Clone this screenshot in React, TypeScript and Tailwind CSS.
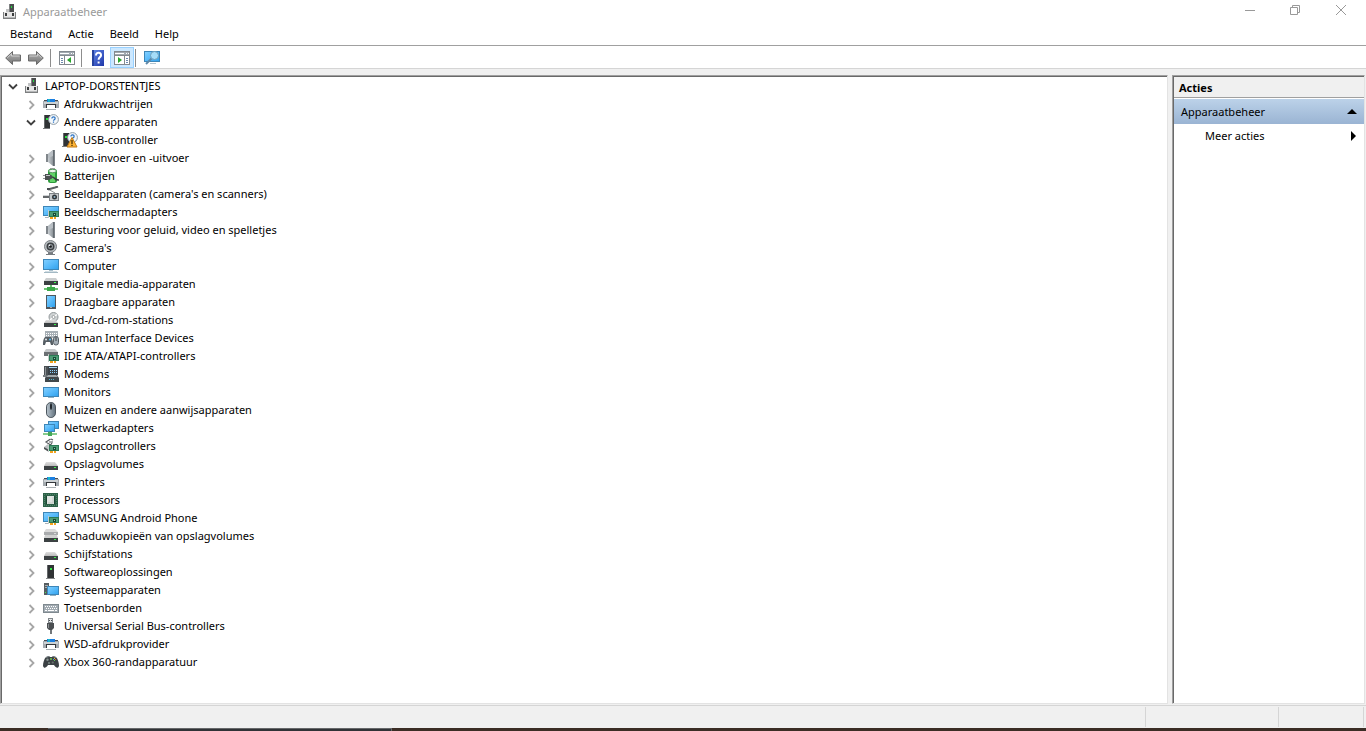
import { useState, type ReactNode } from "react";

const EDGE = "#3d86b8";

function Defs() {
  return (
    <svg className="absolute h-0 w-0" aria-hidden="true">
      <defs>
        <linearGradient id="screen" x1="0" y1="0" x2="1" y2="1">
          <stop offset="0" stopColor="#84d0ff" />
          <stop offset=".5" stopColor="#58bafa" />
          <stop offset="1" stopColor="#2fa0ec" />
        </linearGradient>
        <linearGradient id="metal" x1="0" y1="0" x2="0" y2="1">
          <stop offset="0" stopColor="#dedede" />
          <stop offset="1" stopColor="#bcbcbc" />
        </linearGradient>
        <linearGradient id="cone" x1="0" y1="0" x2="1" y2="0">
          <stop offset="0" stopColor="#c9ced2" />
          <stop offset=".5" stopColor="#a0a7ac" />
          <stop offset="1" stopColor="#737a80" />
        </linearGradient>
        <linearGradient id="arrow" x1="0" y1="0" x2="0" y2="1">
          <stop offset="0" stopColor="#b4b4b4" />
          <stop offset="1" stopColor="#747474" />
        </linearGradient>
        <linearGradient id="help" x1="0" y1="0" x2="1" y2="1">
          <stop offset="0" stopColor="#6288e8" />
          <stop offset="1" stopColor="#1e36a8" />
        </linearGradient>
        <linearGradient id="mouse" x1="0" y1="0" x2="1" y2="0">
          <stop offset="0" stopColor="#b9c5ce" />
          <stop offset="1" stopColor="#61707c" />
        </linearGradient>
      </defs>
    </svg>
  );
}

function Screen({ x, y, w, h }: { x: number; y: number; w: number; h: number }) {
  return <rect x={x + 0.5} y={y + 0.5} width={w - 1} height={h - 1} fill="url(#screen)" stroke={EDGE} />;
}

function Card({ x = 5, y = 6 }: { x?: number; y?: number }) {
  return (
    <g>
      <path d={`M${x} ${y}h1v8h-1z`} fill="#c3ccc7" />
      <rect x={x + 1} y={y + 1} width="10" height="6" fill="#2c7a55" />
      <rect x={x + 2} y={y + 2} width="8" height="4" fill="#4c9c74" />
      <rect x={x + 5} y={y + 3} width="3" height="3" fill="#174a35" />
      <rect x={x + 6} y={y + 4} width="1" height="1" fill="#8fd0ae" />
      <path d={`M${x + 2} ${y + 7}h3v2h-3zM${x + 6} ${y + 7}h2v2h-2z`} fill="#f3a31c" />
    </g>
  );
}

function Drive({ y = 6 }: { y?: number }) {
  return (
    <g>
      <path d={`M3 ${y}h9l3 4H1z`} fill="url(#metal)" />
      <rect x="1" y={y + 4} width="14" height="4" fill="#3c4143" />
      <rect x="11" y={y + 5} width="2" height="1" fill="#39f04a" />
    </g>
  );
}

function Tower({ x = 1 }: { x?: number }) {
  return (
    <g>
      <rect x={x} y="1" width="6" height="14" fill="#303335" />
      <rect x={x} y="1" width="1" height="14" fill="#66696b" />
      <rect x={x + 2} y="4" width="2" height="2" fill="#2be33f" />
      <path d={`M${x - 1} 14h7v1h-7z`} fill="#77797b" />
    </g>
  );
}

function Bubble() {
  return (
    <g>
      <circle cx="10.500" cy="5.500" r="4.900" fill="#f4f8fb" stroke="#8f9ca6" />
      <path d="M8.900 4.400c0-2.200 3.400-2 3.200 0 0 1.200-1.600 1.300-1.600 2.300M10.500 7.600v1.200" fill="none" stroke="#2c73c4" strokeWidth="1.200" />
    </g>
  );
}

const printer = (
  <g>
    <rect x="0" y="5" width="16" height="7" fill="#a4aaaf" />
    <rect x="1" y="6" width="14" height="2" fill="#cdd2d5" />
    <rect x="1" y="4" width="3" height="1" fill="#474c50" />
    <rect x="12" y="4" width="3" height="1" fill="#474c50" />
    <rect x="4" y="3" width="8" height="3" fill="#1b7fe0" />
    <rect x="5" y="3" width="2" height="3" fill="#1fb7c9" />
    <rect x="3" y="8" width="10" height="4" fill="#34383b" />
    <rect x="4" y="9" width="8" height="4" fill="#ffffff" />
    <rect x="3" y="13" width="10" height="1" fill="#a9afb3" />
  </g>
);

const speaker = (
  <g>
    <rect x="3" y="4" width="3" height="8" fill="#80868b" />
    <path d="M5 4l5-4h2v16h-2l-5-4z" fill="url(#cone)" />
    <path d="M5 4l5-4v6L5 8z" fill="#b9bfc4" />
    <path d="M10 0h1v16h-1z" fill="#656c72" />
  </g>
);

const adapter = (
  <g>
    <Screen x={0} y={2} w={16} h={10} />
    <rect x="2" y="13" width="4" height="1" fill="#aab3b8" />
    <Card />
  </g>
);

const pcUnit = (
  <g>
    <rect x="7" y="0" width="5" height="9" fill="#4a4c4d" />
    <rect x="7" y="0" width="1" height="9" fill="#808283" />
    <rect x="9" y="2" width="1" height="2" fill="#20df3c" />
    <path d="M4 5h3v3H4z" fill="#c2c3c4" />
    <path d="M1 8h13v7H1z" fill="#7d7f80" />
    <path d="M2 8h11v5H2z" fill="#e6e6e6" />
    <path d="M3 9h2v3H3zM10 9h2v3h-2z" fill="#3b3d3e" />
    <path d="M2 13h11v1H2z" fill="#b5b7b8" />
  </g>
);

const icons: Record<string, ReactNode> = {
  pcUnit,
  printer,
  speaker,
  adapter,
  unknown: (
    <g>
      <Tower />
      <Bubble />
    </g>
  ),
  warning: (
    <g>
      <Tower />
      <Bubble />
      <path d="M10 5.500l5 9.500H5z" fill="#ffb536" stroke="#c27a14" />
      <path d="M10 8v4M10 12.800v1.300" stroke="#3b2500" strokeWidth="1.200" />
    </g>
  ),
  battery: (
    <g>
      <path d="M7 0h5v2H7z" fill="#9aa39c" />
      <rect x="5" y="1" width="9" height="14" rx="2.500" fill="#2d9a3c" />
      <path d="M7 4h5v10H7z" fill="#62d468" />
      <ellipse cx="9.500" cy="3" rx="3.800" ry="1.700" fill="#f0f7f0" stroke="#4a8a56" strokeWidth=".8" />
      <path d="M0 7.500h3M0 10.500h3" stroke="#8d9193" />
      <path d="M2 6h4l3 1.500v3L6 12H2z" fill="#4b4f51" />
      <path d="M3 7h4v1H3z" fill="#c2c6c8" />
      <path d="M9 9c3 0 2.500 3.500 7 3" fill="none" stroke="#3a3e40" strokeWidth="1.500" />
    </g>
  ),
  imaging: (
    <g>
      <path d="M5 3.500l7-2 3-1" stroke="#5b6063" strokeWidth="2" />
      <path d="M5 3l7 4" stroke="#8b9093" />
      <path d="M4 2h3v2H4z" fill="#484c4f" />
      <path d="M0 10h8v2H0z" fill="#63676a" />
      <path d="M0 9h7v1H0z" fill="#cfd2d4" />
      <path d="M6 7h10v8H6z" fill="#7d8286" />
      <path d="M7 8h8v6H7z" fill="#c6cacd" />
      <circle cx="11.500" cy="11" r="2.500" fill="#30363a" />
      <circle cx="11.500" cy="11" r="1" fill="#8fb1c5" />
    </g>
  ),
  camera: (
    <g>
      <path d="M5 12h5v2H5zM3 14h9v1H3z" fill="#777c80" />
      <circle cx="7.500" cy="6.500" r="6" fill="#b8bdc1" stroke="#7b8084" />
      <circle cx="7.500" cy="6.500" r="4" fill="#3c4043" />
      <circle cx="7.500" cy="6.500" r="2.500" fill="#8d9499" />
      <circle cx="7.500" cy="6.500" r="1.300" fill="#16181a" />
      <circle cx="6.500" cy="5.300" r=".8" fill="#fff" />
    </g>
  ),
  computer: (
    <g>
      <Screen x={0} y={1} w={16} h={11} />
      <path d="M6 12h4v1H6z" fill="#a9c0cd" />
      <path d="M1 14h14v1H1z" fill="#a3b9c4" />
      <path d="M2 13h12v1H2z" fill="#d2dee4" />
    </g>
  ),
  media: (
    <g>
      <path d="M3 2h10l2 3H1z" fill="#cbcecf" />
      <rect x="1" y="5" width="14" height="4" fill="#3c4143" />
      <rect x="11" y="6" width="2" height="1" fill="#3eff50" />
      <path d="M7 9h2v3H7zM1 12h14v2H1z" fill="#6cc274" />
      <path d="M4 11h8v4H4z" fill="#3ca84a" />
    </g>
  ),
  portable: (
    <g>
      <rect x="3" y="1" width="10" height="14" fill="#4f565c" />
      <rect x="4" y="2" width="8" height="11" fill="url(#screen)" />
      <rect x="7" y="13" width="2" height="1" fill="#a7aaad" />
    </g>
  ),
  disc: (
    <g>
      <circle cx="10.500" cy="5" r="4.500" fill="#cfd3d4" stroke="#92989b" />
      <path d="M10.500 5L14 2.500M10.500 5L7 8" stroke="#fff" strokeWidth="1.200" />
      <circle cx="10.500" cy="5" r="1.500" fill="#fff" stroke="#8a8f92" strokeWidth=".8" />
      <path d="M3 8h9l3 3H1z" fill="url(#metal)" />
      <rect x="1" y="11" width="14" height="4" fill="#3c4143" />
      <rect x="11" y="12" width="2" height="1" fill="#39f04a" />
    </g>
  ),
  hid: (
    <g>
      <path d="M2 1h13v7H2z" fill="#a7afb5" />
      <path d="M3 3.500h11M3 5.500h11" stroke="#fff" strokeDasharray="1 1" />
      <path d="M2 7h6c2 2 2 5 2 8H8l-1-3H3l-1 3H0c0-3 0-6 2-8z" fill="#565e64" />
      <circle cx="3" cy="9.500" r="1" fill="#e5e8ea" />
      <circle cx="7" cy="9.500" r="1" fill="#5ec0f2" />
      <rect x="10.500" y="6.500" width="5" height="8.500" rx="2.400" fill="#a3adb5" stroke="#586066" />
      <path d="M13 7v4" stroke="#3d4246" />
    </g>
  ),
  ide: (
    <g>
      <path d="M3 1h9l3 3H1z" fill="#c4c7c9" />
      <path d="M1 4h14v4H1z" fill="#6b7073" />
      <Card />
    </g>
  ),
  modem: (
    <g>
      <path d="M1 0h4v10H1z" fill="#4b5155" />
      <path d="M2 1h1v8H2z" fill="#8b9195" />
      <path d="M5 0h10v9H5z" fill="#3a4248" />
      <path d="M6 1h8v1H6z" fill="#a9d7f2" />
      <path d="M7 4.500h7M7 6.500h7" stroke="#8fd0fa" strokeDasharray="1 1" />
      <path d="M0 9h4v2H0z" fill="#797f83" />
      <path d="M4 9h10l2 3v4H2v-4z" fill="#41484c" />
      <path d="M5 9h8l2 2H3z" fill="#a1a8ac" />
      <path d="M6 13.500h5" stroke="#54b6d1" strokeDasharray="1 1" />
    </g>
  ),
  monitor: (
    <g>
      <Screen x={0} y={3} w={16} h={10} />
      <path d="M5 13h6v1H5z" fill="#8fb2c5" />
    </g>
  ),
  mouse: (
    <g>
      <rect x="3.500" y=".5" width="9" height="15" rx="4.400" fill="url(#mouse)" stroke="#4c565e" />
      <path d="M8 1v7" stroke="#343a3f" />
      <rect x="7" y="2" width="2" height="5" rx="1" fill="#22292e" />
    </g>
  ),
  network: (
    <g>
      <Screen x={5} y={1} w={11} h={8} />
      <Screen x={1} y={4} w={11} h={8} />
      <path d="M6 12h2v1H6z" fill="#78bf7b" />
      <path d="M0 13h14v2H0z" fill="#86cb8c" />
      <path d="M5 12h4v4H5z" fill="#43a858" />
    </g>
  ),
  controller: (
    <g>
      <path d="M1 9l4-3 5 2v5H5z" fill="#bcc0c3" />
      <path d="M1 9l5 3v2l-5-3z" fill="#4c5052" />
      <path d="M7.500 1L3 4l4.500 3L9 5M6 4h4M8 1l2 1" fill="none" stroke="#54595c" strokeWidth="1.200" />
      <Card />
    </g>
  ),
  drive: <Drive />,
  processor: (
    <g>
      <rect x="0" y="1" width="15" height="14" fill="#2d6148" />
      <path d="M1 2.500h13M1 13.500h13M1.500 2v12M13.500 2v12" stroke="#4f8368" strokeDasharray="1 1" />
      <rect x="3" y="4" width="9" height="8" fill="#1c4733" />
      <rect x="4" y="4" width="7" height="8" fill="#dfe4e1" />
      <path d="M5 11h5V5" fill="none" stroke="#c2cac5" />
    </g>
  ),
  shadow: (
    <g>
      <path d="M3 1h9l3 3H1z" fill="#dadada" />
      <rect x="1" y="4" width="14" height="3" fill="#a9abad" />
      <rect x="11" y="5" width="2" height="1" fill="#d9dcdc" />
      <path d="M2 7h12l1 3H1z" fill="#cfd0d0" />
      <rect x="1" y="10" width="14" height="4" fill="#3c4143" />
      <rect x="11" y="11" width="2" height="1" fill="#39f04a" />
    </g>
  ),
  software: (
    <g>
      <rect x="4" y="1" width="7" height="13" fill="#303335" />
      <path d="M4 1h1v13H4z" fill="#65696b" />
      <rect x="7" y="4" width="2" height="2" fill="#35e847" />
      <rect x="3" y="14" width="9" height="1" fill="#858788" />
    </g>
  ),
  system: (
    <g>
      <rect x="1" y="1" width="5" height="12" fill="#565d61" />
      <path d="M2 3.500h3M2 5.500h3" stroke="#a9afb3" />
      <rect x="2" y="10" width="1" height="1" fill="#45e154" />
      <Screen x={4} y={4} w={12} h={9} />
      <path d="M7 13h6v1H7z" fill="#8fb0c2" />
    </g>
  ),
  keyboard: (
    <g>
      <rect x=".5" y="4.500" width="15" height="8" fill="#a2abb2" stroke="#7f898f" />
      <path d="M2 6.500h12M3 8.500h11" stroke="#fff" strokeDasharray="1 1" />
      <path d="M2 10.500h2M5 10.500h6M12 10.500h2" stroke="#fff" />
    </g>
  ),
  usb: (
    <g>
      <rect x="5.500" y=".5" width="4" height="4" fill="#e4e6e7" stroke="#81878b" />
      <path d="M6 2h1v1H6zM8 2h1v1H8z" fill="#44494c" />
      <path d="M4 5h7v5l-2 2H6l-2-2z" fill="#4b4f52" />
      <path d="M5 6h1v4H5z" fill="#8a8e91" />
      <path d="M7 12h2v4H7z" fill="#73787b" />
    </g>
  ),
  gamepad: (
    <g>
      <path d="M3 3l3-1 1 1h2l1-1 3 1c2 2 3 6 3 9-1 3-3 2-5-1H5c-2 3-4 4-5 1 0-3 1-7 3-9z" fill="#3b4144" />
      <path d="M3 3.500l3-1M10 2.500l3 1" stroke="#7b8488" />
      <circle cx="4.500" cy="5.800" r="1.200" fill="#85908e" />
      <circle cx="9.800" cy="8.500" r="1.100" fill="#69716f" />
      <path d="M5 8h2v2H5z" fill="#697573" />
      <path d="M11 4h1v1h-1z" fill="#e5bd28" />
      <path d="M12 5h1v1h-1z" fill="#df4f3e" />
      <path d="M10 5h1v1h-1z" fill="#4197dc" />
      <path d="M11 6h1v1h-1z" fill="#5bc451" />
      <path d="M7 4h2v2H7z" fill="#62a74f" />
    </g>
  ),
};

function Icon({ name }: { name: string }) {
  return (
    <svg className="h-4 w-4 shrink-0" viewBox="0 0 16 16" aria-hidden="true">
      {icons[name]}
    </svg>
  );
}

function Chevron({ open }: { open: boolean }) {
  return (
    <svg className="h-4 w-4" viewBox="0 0 16 16" fill="none" strokeWidth="1.800" aria-hidden="true">
      {open ? <path d="M4 6.500l4 4 4-4" stroke="#404040" /> : <path d="M6.500 5l4 4-4 4" stroke="#a6a6a6" />}
    </svg>
  );
}

type Device = { label: string; icon: string; children?: Device[] };

const devices: Device[] = [
  { label: "Afdrukwachtrijen", icon: "printer" },
  { label: "Andere apparaten", icon: "unknown", children: [{ label: "USB-controller", icon: "warning" }] },
  { label: "Audio-invoer en -uitvoer", icon: "speaker" },
  { label: "Batterijen", icon: "battery" },
  { label: "Beeldapparaten (camera's en scanners)", icon: "imaging" },
  { label: "Beeldschermadapters", icon: "adapter" },
  { label: "Besturing voor geluid, video en spelletjes", icon: "speaker" },
  { label: "Camera's", icon: "camera" },
  { label: "Computer", icon: "computer" },
  { label: "Digitale media-apparaten", icon: "media" },
  { label: "Draagbare apparaten", icon: "portable" },
  { label: "Dvd-/cd-rom-stations", icon: "disc" },
  { label: "Human Interface Devices", icon: "hid" },
  { label: "IDE ATA/ATAPI-controllers", icon: "ide" },
  { label: "Modems", icon: "modem" },
  { label: "Monitors", icon: "monitor" },
  { label: "Muizen en andere aanwijsapparaten", icon: "mouse" },
  { label: "Netwerkadapters", icon: "network" },
  { label: "Opslagcontrollers", icon: "controller" },
  { label: "Opslagvolumes", icon: "drive" },
  { label: "Printers", icon: "printer" },
  { label: "Processors", icon: "processor" },
  { label: "SAMSUNG Android Phone", icon: "adapter" },
  { label: "Schaduwkopieën van opslagvolumes", icon: "shadow" },
  { label: "Schijfstations", icon: "drive" },
  { label: "Softwareoplossingen", icon: "software" },
  { label: "Systeemapparaten", icon: "system" },
  { label: "Toetsenborden", icon: "keyboard" },
  { label: "Universal Serial Bus-controllers", icon: "usb" },
  { label: "WSD-afdrukprovider", icon: "printer" },
  { label: "Xbox 360-randapparatuur", icon: "gamepad" },
];

function DeviceRow({ device, leaf = false }: { device: Device; leaf?: boolean }) {
  const [open, setOpen] = useState(Boolean(device.children));
  return (
    <li>
      <div className="flex h-[18px] items-center">
        {leaf ? (
          <span className="w-4" />
        ) : (
          <button type="button" aria-label={device.label} aria-expanded={open} onClick={() => setOpen(!open)}>
            <Chevron open={open} />
          </button>
        )}
        <span className="ml-1 flex items-center gap-[5px] whitespace-nowrap">
          <Icon name={device.icon} />
          {device.label}
        </span>
      </div>
      {open && device.children && (
        <ul className="pl-[19px]">
          {device.children.map((child) => (
            <DeviceRow key={child.label} device={child} leaf={!child.children} />
          ))}
        </ul>
      )}
    </li>
  );
}

function Arrow({ flip = false }: { flip?: boolean }) {
  return (
    <svg className={flip ? "h-4 w-4 -scale-x-100" : "h-4 w-4"} viewBox="0 0 16 16" aria-hidden="true">
      <path d="M.7 8L7.500 1.500v3.500h8v6h-8v3.500z" fill="url(#arrow)" stroke="#6a6a6a" />
      <path d="M2.300 7.800l4.200-4V6h8" fill="none" stroke="#cfcfcf" />
    </svg>
  );
}

function PaneIcon({ right = false }: { right?: boolean }) {
  return (
    <svg className="h-4 w-4" viewBox="0 0 16 16" aria-hidden="true">
      <rect x=".5" y="1.500" width="15" height="13" fill="#fff" stroke="#83898f" />
      <path d="M1 2h14v3H1z" fill="#a2a9b1" />
      <path d="M1 3.500h9" stroke="#fff" />
      <path d="M12 3.500h1M14 3.500h1" stroke="#fff" />
      <path d="M1 5.500h14" stroke="#83898f" />
      {right ? (
        <g>
          <path d="M10.500 6v8" stroke="#83898f" />
          <path d="M12 8.500h2M12 10.500h2M12 12.500h2" stroke="#6f8aae" />
          <path d="M4 7l4 3-4 3z" fill="#29a52c" />
        </g>
      ) : (
        <g>
          <path d="M5.500 6v8" stroke="#83898f" />
          <path d="M2 8.500h2M2 10.500h2M2 12.500h2" stroke="#6f8aae" />
          <path d="M12 7l-4 3 4 3z" fill="#29a52c" />
        </g>
      )}
    </svg>
  );
}

function Separator() {
  return <span className="h-[18px] w-px bg-[#8d8d8d]" />;
}

const sunkenOuter =
  "flex flex-col border border-t-[#a0a0a0] border-l-[#a0a0a0] border-r-[#e3e3e3] border-b-[#e3e3e3] bg-white";
const sunkenInner = "min-h-0 grow border-t border-l border-[#696969]";

export default function App() {
  const [rootOpen, setRootOpen] = useState(true);
  return (
    <div className="flex h-screen flex-col overflow-hidden bg-[#f0f0f0] font-['Noto_Sans','Open_Sans',sans-serif] text-[11px] leading-[18px] text-black">
      <Defs />
      <header className="flex h-6 shrink-0 items-center justify-between bg-white pl-[2px]">
        <h1 className="flex items-center gap-[5px] text-[#999999]">
          <Icon name="pcUnit" />
          Apparaatbeheer
        </h1>
        <div className="flex h-full items-start">
          <button type="button" aria-label="Minimaliseren" className="flex h-5 w-[45px] items-center justify-center">
            <svg className="h-3 w-3" viewBox="0 0 12 12">
              <path d="M1 6.500h10" stroke="#999" />
            </svg>
          </button>
          <button type="button" aria-label="Verkleinen" className="flex h-5 w-[46px] items-center justify-center">
            <svg className="h-3 w-3" viewBox="0 0 12 12" fill="none" stroke="#999">
              <path d="M1.500 3.500h7v7h-7zM3.500 3V1.500h7v7H9" />
            </svg>
          </button>
          <button type="button" aria-label="Sluiten" className="flex h-5 w-[46px] items-center justify-center">
            <svg className="h-3 w-3" viewBox="0 0 12 12">
              <path d="M1 1l10 10M11 1L1 11" stroke="#999" />
            </svg>
          </button>
          <span className="w-[2px]" />
        </div>
      </header>

      <nav className="flex h-[22px] shrink-0 items-center gap-4 border-b border-[#a0a0a0] bg-white pb-[2px] pl-[10px]">
        <button type="button">Bestand</button>
        <button type="button">Actie</button>
        <button type="button">Beeld</button>
        <button type="button">Help</button>
      </nav>

      <div role="toolbar" className="flex h-[23px] shrink-0 items-center border-b border-[#d5d5d5] bg-white pt-px pl-[5px]">
        <div className="flex items-center gap-[7px] pr-[6px]">
          <button type="button" aria-label="Vorige">
            <Arrow />
          </button>
          <button type="button" aria-label="Volgende">
            <Arrow flip />
          </button>
        </div>
        <Separator />
        <button type="button" aria-label="Consolestructuur" className="pr-[6px] pl-2">
          <PaneIcon />
        </button>
        <Separator />
        <button type="button" aria-label="Help" className="pr-1 pl-2">
          <svg className="h-4 w-4" viewBox="0 0 16 16" aria-hidden="true">
            <path d="M2 0h12v16H2z" fill="url(#help)" />
            <path d="M2 0h2v16H2z" fill="#27439e" />
            <path d="M6 5.500c0-4 5.600-3.500 5 0-.3 1.800-2.400 2-2.400 4.200M8.600 11.500v2" fill="none" stroke="#fff" strokeWidth="2" />
          </svg>
        </button>
        <button
          type="button"
          aria-label="Actiedeelvenster"
          aria-pressed="true"
          className="flex h-[21px] w-6 items-center justify-center border border-[#99d1ff] bg-[#cce8ff]"
        >
          <PaneIcon right />
        </button>
        <span className="w-px" />
        <Separator />
        <button type="button" aria-label="Zoeken naar gewijzigde apparaten" className="px-2">
          <svg className="h-4 w-4" viewBox="0 0 16 16" aria-hidden="true">
            <Screen x={0} y={1} w={16} h={11} />
            <path d="M6 13h6v1H6z" fill="#b4c5cf" />
            <path d="M7.500 8.500L2 14" stroke="#5f88a8" strokeWidth="2" />
            <circle cx="10.500" cy="5.500" r="4" fill="#a5dcf9" stroke="#6f9dba" />
          </svg>
        </button>
      </div>

      <main className="flex min-h-0 grow gap-1 pt-[6px] pr-px">
        <section aria-label="Apparaten" className={`min-w-0 grow ${sunkenOuter}`}>
          <div className={`overflow-auto pl-[3px] ${sunkenInner}`}>
            <div className="flex h-[18px] items-center">
              <button type="button" aria-label="LAPTOP-DORSTENTJES" aria-expanded={rootOpen} onClick={() => setRootOpen(!rootOpen)}>
                <Chevron open={rootOpen} />
              </button>
              <span className="ml-[3px] flex items-center gap-[5px] whitespace-nowrap">
                <Icon name="pcUnit" />
                LAPTOP-DORSTENTJES
              </span>
            </div>
            {rootOpen && (
              <ul className="pl-[18px]">
                {devices.map((device) => (
                  <DeviceRow key={device.label} device={device} />
                ))}
              </ul>
            )}
          </div>
        </section>

        <aside className={`w-[193px] shrink-0 ${sunkenOuter}`}>
          <div className={sunkenInner}>
            <h2 className="flex h-[21px] items-center border-b border-[#a0a0a0] bg-[#f0f0f0] pt-px pl-[5px] font-bold">Acties</h2>
            <button
              type="button"
              className="mt-px flex h-[25px] w-full items-center justify-between bg-linear-to-b from-[#bcd2e9] to-[#9ab4d3] pr-[7px] pl-[7px]"
            >
              Apparaatbeheer
              <svg className="h-[5px] w-[10px]" viewBox="0 0 10 5" aria-hidden="true">
                <path d="M0 5l5-5 5 5z" />
              </svg>
            </button>
            <button type="button" className="flex h-6 w-full items-center justify-between pr-2 pl-[31px]">
              Meer acties
              <svg className="h-[10px] w-[5px]" viewBox="0 0 5 10" aria-hidden="true">
                <path d="M0 0l5 5-5 5z" />
              </svg>
            </button>
          </div>
        </aside>
      </main>

      <footer className="mt-px flex h-[23px] shrink-0 justify-end border-t border-[#d5d5d5] bg-[#f0f0f0] py-px pr-[2px]">
        <span className="w-[133px] border-l border-[#d5d5d5]" />
        <span className="w-[86px] border-x border-[#d5d5d5]" />
      </footer>
      <div className="flex h-[3px] shrink-0 bg-[#3b2d25]">
        <span className="ml-12 w-[344px] border-t border-r border-[#66686a] bg-[#303236]" />
      </div>
    </div>
  );
}
